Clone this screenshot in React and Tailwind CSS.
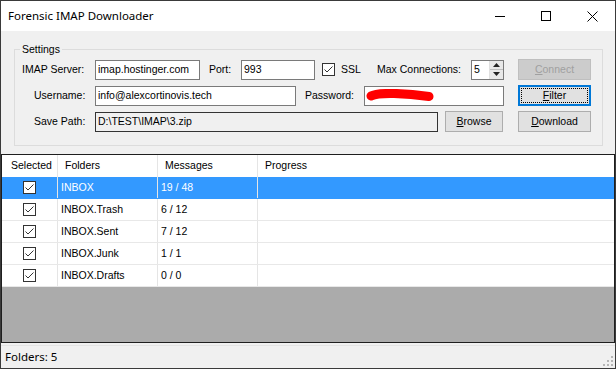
import React from 'react';

const rows = [
    { name: 'INBOX', msgs: '19 / 48', selected: true },
    { name: 'INBOX.Trash', msgs: '6 / 12' },
    { name: 'INBOX.Sent', msgs: '7 / 12' },
    { name: 'INBOX.Junk', msgs: '1 / 1' },
    { name: 'INBOX.Drafts', msgs: '0 / 0' },
];

const CheckBox = () => (
    <div className="w-[13px] h-[13px] border border-[#333] bg-white flex items-center justify-center shrink-0">
        <svg width="11" height="11" viewBox="0 0 11 11">
            <path d="M1.5 5.5 L4 8 L9.5 2.5" fill="none" stroke="#333" strokeWidth="1" />
        </svg>
    </div>
);

const Button = ({ children, className = '' }) => (
    <div className={`h-[21px] w-[73px] bg-[#e1e1e1] border border-[#adadad] flex items-center justify-center text-[#000] shrink-0 ${className}`}>
        {children}
    </div>
);

const App = () => {
    return (
        <div className="w-[616px] h-[369px] border border-[#3a3a3a] bg-[#f0f0f0] flex flex-col overflow-hidden text-[10.5px] text-black" style={{ fontFamily: '"Liberation Sans", Arial, sans-serif' }}>

            {/* Title bar */}
            <div className="h-[30px] bg-white flex items-center shrink-0">
                <span className="ml-[7px] text-[11.5px] text-black" style={{ fontFamily: '"Noto Sans", sans-serif' }}>Forensic IMAP Downloader</span>
                <div className="ml-auto flex h-full">
                    <div className="w-[46px] h-full flex items-center justify-center">
                        <svg width="10" height="10" viewBox="0 0 10 10"><path d="M0 5.5 H10" stroke="#000" strokeWidth="1" /></svg>
                    </div>
                    <div className="w-[46px] h-full flex items-center justify-center">
                        <svg width="10" height="10" viewBox="0 0 10 10"><rect x="0.5" y="0.5" width="9" height="9" fill="none" stroke="#000" strokeWidth="1" /></svg>
                    </div>
                    <div className="w-[46px] h-full flex items-center justify-center">
                        <svg width="11" height="11" viewBox="0 0 11 11"><path d="M0.5 0.5 L10.5 10.5 M10.5 0.5 L0.5 10.5" stroke="#000" strokeWidth="1" /></svg>
                    </div>
                </div>
            </div>

            {/* Settings group */}
            <div className="h-[123px] shrink-0 pl-[13px] pt-[18px]">
                <div className="relative w-[589px] h-[97px] border border-[#dcdcdc] pt-[9px] pl-[7px] flex flex-col gap-[5px]">
                    <span className="absolute -top-[8px] left-[5px] px-[2px] bg-[#f0f0f0]">Settings</span>

                    {/* Row 1 */}
                    <div className="h-[21px] flex items-center">
                        <span className="w-[73px]">IMAP Server:</span>
                        <div className="w-[105px] h-[20px] border border-[#7a7a7a] bg-white flex items-center pl-[2px]">imap.hostinger.com</div>
                        <span className="ml-[9px] w-[32px]">Port:</span>
                        <div className="w-[74px] h-[20px] border border-[#7a7a7a] bg-white flex items-center pl-[2px]">993</div>
                        <div className="ml-[7px] w-[55px] flex items-center gap-[6px]">
                            <CheckBox />
                            <span>SSL</span>
                        </div>
                        <span className="w-[94px]">Max Connections:</span>
                        <div className="w-[33px] h-[20px] border border-[#7a7a7a] bg-white flex items-center pl-[2px]">
                            <span className="flex-1">5</span>
                            <div className="w-[14px] h-full flex flex-col border-l border-[#e0e0e0]">
                                <div className="flex-1 bg-[#e8e8e8] border-b border-[#bdbdbd] flex items-center justify-center">
                                    <svg width="7" height="4" viewBox="0 0 7 4"><path d="M0 4 L3.5 0 L7 4 Z" fill="#222" /></svg>
                                </div>
                                <div className="flex-1 bg-[#e8e8e8] flex items-center justify-center">
                                    <svg width="7" height="4" viewBox="0 0 7 4"><path d="M0 0 L3.5 4 L7 0 Z" fill="#222" /></svg>
                                </div>
                            </div>
                        </div>
                        <Button className="ml-[14px] !bg-[#cccccc] !border-[#bfbfbf] !text-[#a0a0a0]"><span><u>C</u>onnect</span></Button>
                    </div>

                    {/* Row 2 */}
                    <div className="h-[21px] flex items-center">
                        <span className="w-[73px] pl-[12px]">Username:</span>
                        <div className="w-[201px] h-[20px] border border-[#7a7a7a] bg-white flex items-center pl-[2px]">info@alexcortinovis.tech</div>
                        <span className="ml-[9px] w-[59px]">Password:</span>
                        <div className="w-[140px] h-[20px] border border-[#7a7a7a] bg-white flex items-center pl-[1px]">
                            <svg width="70" height="14" viewBox="0 0 70 14">
                                <path d="M5 7 C 12 3, 40 4, 63 7.5" fill="none" stroke="#ff0000" strokeWidth="9" strokeLinecap="round" />
                            </svg>
                        </div>
                        <div className="ml-[14px] h-[21px] w-[73px] bg-[#e1e1e1] border-2 border-[#0078d7] p-[1px] shrink-0">
                            <div className="h-full border border-dotted border-black flex items-center justify-center">
                                <span><u>F</u>ilter</span>
                            </div>
                        </div>
                    </div>

                    {/* Row 3 */}
                    <div className="h-[21px] flex items-center">
                        <span className="w-[73px] pl-[12px]">Save Path:</span>
                        <div className="w-[343px] h-[20px] border border-[#333] bg-[#f0f0f0] flex items-center pl-[2px]">D:\TEST\IMAP\3.zip</div>
                        <Button className="ml-[7px] !w-[58px]"><span><u>B</u>rowse</span></Button>
                        <Button className="ml-[15px]"><span><u>D</u>ownload</span></Button>
                    </div>
                </div>
            </div>

            {/* Folders grid */}
            <div className="h-[189px] shrink-0 border border-[#1e1e1e] bg-[#ababab] flex flex-col">
                <div className="h-[22px] bg-white flex shrink-0">
                    <div className="w-[56px] border-r border-[#e5e5e5] flex items-center pl-[9px]">Selected</div>
                    <div className="w-[100px] border-r border-[#e5e5e5] flex items-center pl-[7px]">Folders</div>
                    <div className="w-[100px] border-r border-[#e5e5e5] flex items-center pl-[7px]">Messages</div>
                    <div className="flex-1 flex items-center pl-[7px]">Progress</div>
                </div>
                {rows.map((r) => (
                    <div key={r.name} className={`h-[22px] flex shrink-0 border-b ${r.selected ? 'bg-[#3399ff] text-white border-[#3399ff]' : 'bg-white border-[#e8e8e8]'}`}>
                        <div className="w-[56px] border-r border-[#e5e5e5] flex items-center justify-center">
                            <CheckBox />
                        </div>
                        <div className="w-[100px] border-r border-[#e5e5e5] flex items-center pl-[3px]">{r.name}</div>
                        <div className="w-[100px] border-r border-[#e5e5e5] flex items-center pl-[3px]">{r.msgs}</div>
                        <div className="flex-1" />
                    </div>
                ))}
            </div>

            {/* Status bar */}
            <div className="flex-1 mt-[2px] border-t border-[#e3e3e3] flex items-center pl-[4px] pr-[2px]">
                <span className="text-[11.5px]" style={{ fontFamily: '"Noto Sans", sans-serif' }}>Folders: 5</span>
                <svg className="ml-auto self-end mb-[2px]" width="10" height="10" viewBox="0 0 10 10">
                    <rect x="8" y="0" width="2" height="2" fill="#b5b5b5" />
                    <rect x="4" y="4" width="2" height="2" fill="#b5b5b5" />
                    <rect x="8" y="4" width="2" height="2" fill="#b5b5b5" />
                    <rect x="0" y="8" width="2" height="2" fill="#b5b5b5" />
                    <rect x="4" y="8" width="2" height="2" fill="#b5b5b5" />
                    <rect x="8" y="8" width="2" height="2" fill="#b5b5b5" />
                </svg>
            </div>
        </div>
    );
};

export default App;
